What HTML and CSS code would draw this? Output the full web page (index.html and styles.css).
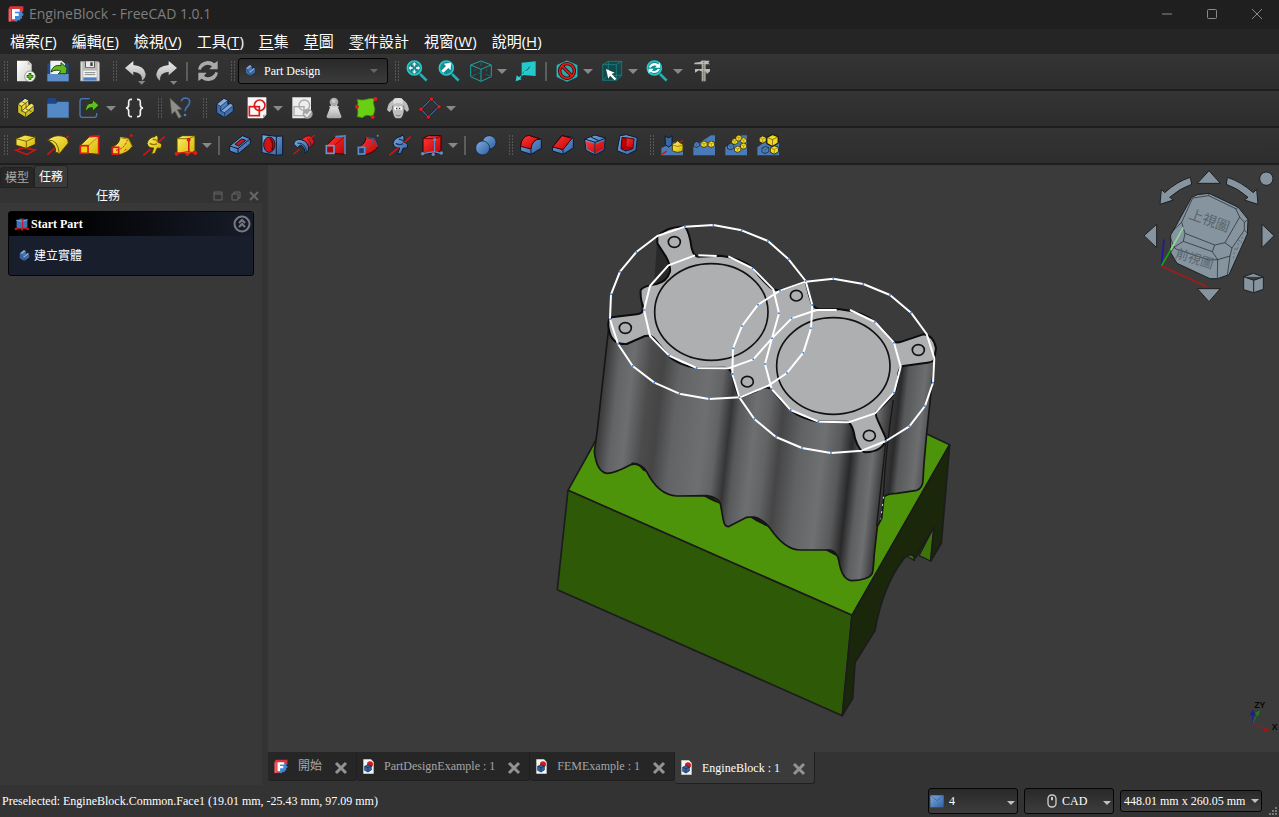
FILE: index.html
```html
<!DOCTYPE html>
<html lang="zh-Hant">
<head>
<meta charset="utf-8">
<title>EngineBlock - FreeCAD 1.0.1</title>
<link rel="stylesheet" href="styles.css">
</head>
<body>
<svg class="defs" aria-hidden="true">
  <defs>
    <linearGradient id="gBlue" x1="0" y1="0" x2="1" y2="1"><stop offset="0" stop-color="#7fabdc"/><stop offset="1" stop-color="#2f5fa3"/></linearGradient>
    <linearGradient id="gYellow" x1="0" y1="0" x2="1" y2="1"><stop offset="0" stop-color="#fff06a"/><stop offset="1" stop-color="#d3b400"/></linearGradient>
    <linearGradient id="gRed" x1="0" y1="0" x2="1" y2="1"><stop offset="0" stop-color="#ff3a3a"/><stop offset="1" stop-color="#c00000"/></linearGradient>
    <linearGradient id="gGray" x1="0" y1="0" x2="0" y2="1"><stop offset="0" stop-color="#eeeeee"/><stop offset="1" stop-color="#a9a9a9"/></linearGradient>
    <linearGradient id="gPaper" x1="0" y1="0" x2="1" y2="1"><stop offset="0" stop-color="#ffffff"/><stop offset="1" stop-color="#cfcfcb"/></linearGradient>
  </defs>
  <symbol id="logo" viewBox="0 0 48 48">
    <path fill="#d8353f" d="M7 1H46V16H22V46L2 47V6z"/>
    <path fill="#e8636a" d="M2 10H9V46H2z"/>
    <path fill="#3f86d4" d="M20 15H44L42 21 47 23 45 29 41 30 43 37 37 38 36 44 30 42 26 47 20 46z"/>
    <path fill="#fff" d="M12 9H35V17H21V22H32V30H21V40H12z"/>
  </symbol>
  <symbol id="step" viewBox="0 0 66 66">
    <path d="M8 22 30 4 42 10V22L50 19 58 25V43L32 62 8 47z" fill="currentColor" stroke="#10203a" stroke-width="3" stroke-linejoin="round"/>
    <path d="M9 22 30 5 41 11 20 28z" fill="#fff" fill-opacity=".35"/>
    <path d="M20 42 50 20 57 26 32 46z" fill="#fff" fill-opacity=".3"/>
    <path d="M9 23 20 28V42L32 47V61L9 47zM32 47 57 27V43L32 61z" fill="#000" fill-opacity=".12"/>
    <path d="M9 22 20 28 41 11M20 28V42L32 47 57 26M32 47V61M42 11V24L20 42" fill="none" stroke="#10203a" stroke-width="2"/>
  </symbol>
  <symbol id="cubelet" viewBox="1 1 22 23">
    <path d="M2 7 12 2 22 6V17L12 23 2 18z" fill="currentColor" stroke="#15150a" stroke-width="2"/>
    <path d="M2 7 12 11 22 6M12 11V23" fill="none" stroke="#3a3408" stroke-width="1"/>
  </symbol>
  <symbol id="doc" viewBox="0 0 33 45">
    <path d="M1 1H24L32 9V44H1z" fill="#f4f4f4"/>
    <circle cx="21" cy="16" r="9" fill="#d61a1a"/>
    <path d="M5 22 15 17 25 21V33L15 39 5 34z" fill="#3465a4" stroke="#11284a" stroke-width="2"/>
    <path d="M5 22 15 26 25 21M15 26V38" fill="none" stroke="#11284a" stroke-width="2"/>
  </symbol>
  <symbol id="lens" viewBox="0 0 66 66">
    <path d="M42 42 62 62" stroke="#19b5b8" stroke-width="8"/>
    <circle cx="25" cy="24" r="21" fill="#148b8f" stroke="#28c9cc" stroke-width="5"/>
  </symbol>
  <symbol id="close" viewBox="0 0 14 14"><path d="M2 2 12 12M12 2 2 12" stroke="#929292" stroke-width="3"/></symbol>
</svg>

<div class="app">
  <header class="titlebar">
    <svg class="logo"><use href="#logo"/></svg>
    <h1>EngineBlock - FreeCAD 1.0.1</h1>
    <div class="window-buttons">
      <button aria-label="最小化"><svg viewBox="0 0 12 12"><path d="M1 6H11"/></svg></button>
      <button aria-label="最大化"><svg viewBox="0 0 12 12"><rect x="1.5" y="1.5" width="9" height="9" rx="1"/></svg></button>
      <button aria-label="關閉"><svg viewBox="0 0 12 12"><path d="M1 1 11 11M11 1 1 11"/></svg></button>
    </div>
  </header>

  <nav class="menubar">
    <button>檔案(<u>F</u>)</button><button>編輯(<u>E</u>)</button><button>檢視(<u>V</u>)</button><button>工具(<u>T</u>)</button><button><u>巨</u>集</button><button><u>草</u>圖</button><button><u>零</u>件設計</button><button>視窗(<u>W</u>)</button><button>說明(<u>H</u>)</button>
  </nav>

  <div class="toolbar">
    <div class="group"><i class="grip"></i>
      <button class="tool" aria-label="新增"><svg viewBox="0 0 66 66"><path d="M6 2H40L50 12V64H6z" fill="url(#gPaper)"/><path d="M38 2 50 14H38z" fill="#bdbdb8"/><circle cx="45" cy="49" r="16" fill="#f3f7ef" stroke="#777" stroke-width="2"/><path d="M45 39V59M35 49H55" stroke="#1d4d08" stroke-width="8"/><path d="M45 41V57M37 49H53" stroke="#63c41c" stroke-width="4"/></svg></button>
      <button class="tool" aria-label="開啟"><svg viewBox="0 0 66 66"><path d="M1 10H65V64H1z" fill="#204a87"/><path d="M10 2H44L54 11V50H10z" fill="#f2f2f2"/><path d="M1 42H65V64H1z" fill="#5d90cb"/><path d="M12 36Q18 12 42 17V8L60 24 58 41H34L42 34Q28 26 12 36z" fill="#62b821" stroke="#1d4a0b" stroke-width="3"/></svg></button>
      <button class="tool" aria-label="儲存"><svg viewBox="0 0 66 66"><path d="M4 4H58L62 8V64H4z" fill="#b9b9b6"/><path d="M8 7V61M58 10V61" stroke="#dededb" stroke-width="4"/><path d="M18 4H48V23H18z" fill="#5a5a58"/><path d="M21 4H45V21H21z" fill="#e9e9e9"/><path d="M34 7H41V18H34z" fill="#3b3b3b"/><path d="M13 32H53V62H13z" fill="#f4f4f4"/><path d="M17 38H49M17 44H49" stroke="#888" stroke-width="3"/><path d="M13 52H53V62H13z" fill="#4b82c4"/></svg></button>
    </div>
    <div class="group"><i class="grip"></i>
      <button class="tool" aria-label="復原"><svg viewBox="0 0 66 66"><path d="M3 24 28 3V15Q62 18 65 42 65 55 54 62 57 38 28 35V46z" fill="url(#gGray)"/><path d="M42 63H64L53 74z" fill="#858585"/></svg></button>
      <button class="tool" aria-label="重做"><svg viewBox="0 0 66 66"><path d="M63 24 38 3V15Q4 18 1 42 1 55 12 62 9 38 38 35V46z" fill="url(#gGray)"/><path d="M42 63H64L53 74z" fill="#858585"/></svg></button>
      <i class="sep"></i>
      <button class="tool" aria-label="重新計算"><svg viewBox="0 0 66 66"><path d="M3 28Q7 6 31 3 42 2 52 10L62 3V28H37L45 19Q32 9 17 21 11 27 11 30z" fill="#aaa"/><path d="M63 38Q59 60 35 63 24 64 14 56L4 63V38H29L21 47Q34 57 49 45 55 39 55 36z" fill="#aaa"/></svg></button>
    </div>
    <div class="group"><i class="grip"></i>
      <label class="combo"><svg class="combo-icon"><use href="#step"/></svg><select aria-label="工作台"><option>Part Design</option></select><i class="caret"></i></label>
    </div>
    <div class="group"><i class="grip"></i>
      <button class="tool" aria-label="顯示全部"><svg viewBox="0 0 66 66"><use href="#lens"/><path d="M25 6 33 14H28V21H35V16L43 24 35 32V27H28V34H33L25 42 17 34H22V27H15V32L7 24 15 16V21H22V14H17z" fill="#f4ffff" stroke="#0d5d60" stroke-width="1"/><path d="M20 19H30V29H20z" fill="#15898c"/></svg></button>
      <button class="tool" aria-label="縮放至選取"><svg viewBox="0 0 66 66"><use href="#lens"/><path d="M10 32 24 18 17 11 39 8 38 31 31 24 16 38z" fill="#fff"/></svg></button>
      <button class="tool more" aria-label="等角視圖"><svg viewBox="0 0 66 66"><g fill="none" stroke="#1ba3a5" stroke-width="3"><path d="M2 15 33 3 64 15V50L33 64 2 50zM2 15 33 28 64 15M33 28V64"/><path d="M33 3V18M2 50 20 42M64 50 46 42M33 45 25 37M15 28V33M50 34V28M33 34V40" stroke="#116c6e"/></g></svg><i class="caret"></i></button>
      <button class="tool" aria-label="前往連結物件"><svg viewBox="0 0 66 66"><path d="M20 8 62 4V48L20 45z" fill="#24c9cb"/><path d="M44 20Q38 30 34 31T20 45" fill="none" stroke="#0b5c5e" stroke-width="3"/><path d="M33 33 12 55" stroke="#35d2d4" stroke-width="4" stroke-dasharray="8 3"/><path d="M2 64 5 46 20 58z" fill="#2fd0d2"/></svg></button>
      <i class="sep"></i>
      <button class="tool more" aria-label="繪圖樣式"><svg viewBox="0 0 66 66"><path d="M3 16 33 3 63 16V50L33 64 3 50z" fill="#21a9ab" stroke="#35cfd1" stroke-width="2"/><circle cx="33" cy="33" r="22" fill="none" stroke="#3c0000" stroke-width="10"/><path d="M17 17 49 49" stroke="#3c0000" stroke-width="10"/><circle cx="33" cy="33" r="22" fill="none" stroke="#e51c1c" stroke-width="5"/><path d="M17 17 49 49" stroke="#e51c1c" stroke-width="5"/></svg><i class="caret"></i></button>
      <button class="tool more" aria-label="選取"><svg viewBox="0 0 66 66"><path d="M5 14 22 4H62V47L46 61H5z" fill="#14494a"/><path d="M5 14H46L62 4M46 14V61M5 14 22 4H62V47L46 61H5zM22 4V46H62M22 46 5 61" fill="none" stroke="#1c8d8f" stroke-width="2"/><path d="M15 27 41 38 32 42 46 56 41 61 27 47 22 56z" fill="#fff"/></svg><i class="caret"></i></button>
      <button class="tool more" aria-label="同步視圖"><svg viewBox="0 0 66 66"><use href="#lens"/><path d="M8 22Q14 8 28 9L38 13 42 7V23H27L32 17Q20 14 14 23zM42 27Q36 40 22 39L12 35 8 41V26H23L18 32Q30 35 36 26z" fill="#f4ffff"/></svg><i class="caret"></i></button>
      <button class="tool" aria-label="測量"><svg viewBox="0 0 66 66"><path d="M32 2H44V64H32z" fill="#aaa99f"/><path d="M10 8 27 6 32 2H56L52 9 57 13H10zM12 27H57V34L48 42 44 34H30L24 31 12 38z" fill="#bdbcb2"/><path d="M38 5V62" stroke="#696861" stroke-width="4" stroke-dasharray="3 3"/></svg></button>
    </div>
  </div>

  <div class="toolbar">
    <div class="group"><i class="grip"></i>
      <button class="tool" aria-label="建立零件"><svg viewBox="0 0 66 66" class="yellow"><use href="#step"/><path d="M20 14 33 20V36L50 44" fill="none" stroke="#4d4300" stroke-width="2"/></svg></button>
      <button class="tool" aria-label="建立群組"><svg viewBox="0 0 66 66"><path d="M1 7 4 3H24L29 11H65V62H1z" fill="#1d4684"/><path d="M1 20H27L32 15H65V63H1z" fill="#5589c6"/><path d="M2 62H65" stroke="#2b5a98" stroke-width="2"/></svg></button>
      <button class="tool more" aria-label="建立連結"><svg viewBox="0 0 66 66"><path d="M32 5H10Q3 5 3 12V54Q3 61 10 61H46Q53 61 53 54V48" fill="none" stroke="#4679b8" stroke-width="4"/><path d="M20 46Q17 18 40 18V7L60 25 40 43V32Q25 31 20 46z" fill="#62bd1f" stroke="#183f08" stroke-width="3"/></svg><i class="caret"></i></button>
      <button class="tool" aria-label="建立變數集"><svg viewBox="0 0 66 66"><path d="M24 7Q13 6 14 17V24Q14 32 6 33 14 34 14 42V49Q13 60 24 59M39 7Q50 6 49 17V24Q49 32 57 33 49 34 49 42V49Q50 60 39 59" fill="none" stroke="#f2f2f2" stroke-width="5"/></svg></button>
    </div>
    <div class="group"><i class="grip"></i>
      <button class="tool" aria-label="這是什麼"><svg viewBox="0 0 66 66"><path d="M3 4 38 36 25 38 37 59 29 64 18 43 8 52z" fill="#8e8e8a" stroke="#5a5a57" stroke-width="2"/><path d="M37 13Q39 3 50 3 63 4 62 16 61 24 54 30 48 35 48 43" fill="none" stroke="#4273b2" stroke-width="5"/><circle cx="48" cy="54" r="4" fill="#4c80c0"/></svg></button>
    </div>
    <div class="group"><i class="grip"></i>
      <button class="tool" aria-label="建立實體"><svg viewBox="0 0 66 66" class="blue"><use href="#step"/></svg></button>
      <button class="tool more" aria-label="建立草圖"><svg viewBox="0 0 66 66"><path d="M5 1H61V53L51 64H5z" fill="#f8f8f8"/><path d="M61 53 51 64V53z" fill="#a8a8a8"/><rect x="10" y="29" width="30" height="27" fill="none" stroke="#dd1717" stroke-width="5"/><circle cx="41" cy="25" r="16" fill="none" stroke="#dd1717" stroke-width="5"/></svg><i class="caret"></i></button>
      <button class="tool" aria-label="驗證草圖"><svg viewBox="0 0 66 66"><path d="M4 1H60V53L50 64H4z" fill="#ededed"/><rect x="9" y="29" width="30" height="27" fill="none" stroke="#aaa" stroke-width="4"/><circle cx="40" cy="25" r="16" fill="none" stroke="#aaa" stroke-width="4"/><circle cx="50" cy="50" r="15" fill="#a6a6a6"/><path d="M41 50 48 57 59 43" fill="none" stroke="#eee" stroke-width="5"/></svg></button>
      <button class="tool" aria-label="檢查幾何"><svg viewBox="0 0 66 66"><path d="M24 24H42L55 58Q56 64 48 64H17Q10 64 11 58z" fill="url(#gGray)"/><circle cx="33" cy="15" r="13" fill="#a9a9a9"/><circle cx="32" cy="12" r="6" fill="#ccc"/><path d="M19 29H47" stroke="#ccc" stroke-width="4"/></svg></button>
      <button class="tool" aria-label="次形狀連結"><svg viewBox="0 0 66 66"><path d="M6 7Q24 11 34 7T58 5Q53 18 58 29T52 60Q35 49 23 62L6 59Q12 40 4 29 12 20 6 7z" fill="#69cf14" stroke="#3b8209" stroke-width="2"/><g fill="#e01b1b"><circle cx="61" cy="6" r="6"/><circle cx="6" cy="29" r="6"/><circle cx="53" cy="60" r="6"/></g></svg></button>
      <button class="tool" aria-label="建立複本"><svg viewBox="0 0 66 66"><path d="M18 10Q22 2 33 3 45 2 49 10 62 15 66 38L60 45 51 35Q49 60 40 64H27Q19 60 16 35L8 46 0 39Q4 15 18 10z" fill="#bcbcbc"/><path d="M18 10Q22 2 33 3 45 2 49 10L46 22Q33 14 20 22z" fill="#dedede"/><path d="M17 26 16 38M50 26 51 38" stroke="#777" stroke-width="3"/><circle cx="27" cy="34" r="6" fill="#fff"/><circle cx="40" cy="34" r="6" fill="#fff"/><path d="M29 32V37M38 32V37" stroke="#333" stroke-width="4"/><path d="M27 54Q34 60 41 54" fill="none" stroke="#777" stroke-width="3"/></svg></button>
      <button class="tool more" aria-label="建立基準"><svg viewBox="0 0 66 66"><path d="M37 6 60 29 28 60 6 37z" fill="none" stroke="#10203a" stroke-width="6"/><path d="M37 6 60 29 28 60 6 37z" fill="none" stroke="#5b8fcb" stroke-width="3"/><g fill="#e01b1b" stroke="#4b0000"><circle cx="37" cy="6" r="6"/><circle cx="60" cy="29" r="6"/><circle cx="28" cy="60" r="6"/><circle cx="6" cy="37" r="6"/></g></svg><i class="caret"></i></button>
    </div>
  </div>

  <div class="toolbar">
    <div class="group"><i class="grip"></i>
      <button class="tool" aria-label="凸出"><svg viewBox="0 0 66 66"><path d="M3 49 24 41 60 48 36 62z" fill="none" stroke="#d01414" stroke-width="5"/><path d="M3 14 30 3 61 9V31L34 43 3 34z" fill="url(#gYellow)" stroke="#463c00" stroke-width="3"/><path d="M3 14 34 22 61 9M34 22V42" fill="none" stroke="#776600" stroke-width="3"/></svg></button>
      <button class="tool" aria-label="旋轉成形"><svg viewBox="0 0 66 66"><path d="M1 62 65 6" stroke="#d01414" stroke-width="5"/><path d="M2 19Q20 1 45 6 64 10 64 27L37 60Q33 56 25 55 30 34 2 19z" fill="url(#gYellow)" stroke="#463c00" stroke-width="3"/><path d="M2 19Q33 14 37 60" fill="none" stroke="#776600" stroke-width="3"/></svg></button>
      <button class="tool" aria-label="疊層拉伸"><svg viewBox="0 0 66 66"><path d="M3 35 31 8 59 6V61L26 58 3 57z" fill="url(#gYellow)" stroke="#463c00" stroke-width="3"/><path d="M31 8 59 6V61" fill="none" stroke="#dd1717" stroke-width="5"/><path d="M27 36 57 9" stroke="#8b7600" stroke-width="2"/><rect x="4" y="35" width="23" height="23" fill="#edd400" stroke="#dd1717" stroke-width="5"/></svg></button>
      <button class="tool" aria-label="掃掠"><svg viewBox="0 0 66 66"><path d="M3 40Q27 29 27 10L53 15 64 37Q50 59 18 63L3 60z" fill="url(#gYellow)" stroke="#463c00" stroke-width="3"/><path d="M27 10 52 14 63 38" fill="none" stroke="#c7a100" stroke-width="3"/><path d="M15 49Q41 44 49 18M41 50 48 42" fill="none" stroke="#dd1717" stroke-width="3" stroke-dasharray="7 4"/><rect x="4" y="40" width="19" height="20" fill="none" stroke="#dd1717" stroke-width="5"/><circle cx="61" cy="5" r="4" fill="#dd1717"/></svg></button>
      <button class="tool" aria-label="螺旋"><svg viewBox="0 0 66 66"><path d="M12 28Q18 9 36 8L38 2 45 8V25Q62 28 53 43L43 42 36 58 25 61 32 42Q16 44 12 28z" fill="url(#gYellow)" stroke="#463c00" stroke-width="3"/><path d="M20 28Q31 35 42 29M29 16Q43 16 45 25" fill="none" stroke="#8b7600" stroke-width="4"/><path d="M1 64 23 45M46 25 65 8" stroke="#d01414" stroke-width="5"/></svg></button>
      <button class="tool more" aria-label="加料基本體"><svg viewBox="0 0 66 66"><path d="M6 13 22 5H60V51L42 60 6 57z" fill="url(#gYellow)" stroke="#463c00" stroke-width="3"/><path d="M6 14H42L60 6M42 14V58" fill="none" stroke="#8b7600" stroke-width="3"/><path d="M41 17V53M4 59 40 53 60 58" fill="none" stroke="#d01414" stroke-width="4"/><g fill="#e01b1b"><circle cx="41" cy="17" r="6"/><circle cx="5" cy="59" r="6"/><circle cx="37" cy="61" r="5"/><circle cx="61" cy="57" r="6"/></g></svg><i class="caret"></i></button>
      <i class="sep"></i>
      <button class="tool" aria-label="凹陷"><svg viewBox="0 0 66 66"><path d="M2 36 40 5 64 14V29L27 60 2 51z" fill="url(#gBlue)" stroke="#0b1a30" stroke-width="3"/><path d="M2 36 27 44 64 14M27 44V59" fill="none" stroke="#0b1a30" stroke-width="3"/><path d="M18 31 38 15 50 19 29 36z" fill="#d01414" stroke="#0b1a30" stroke-width="3"/></svg></button>
      <button class="tool" aria-label="鑽孔"><svg viewBox="0 0 66 66"><path d="M3 2 46 7V64L3 56zM46 7 65 6V62L46 64" fill="url(#gBlue)" stroke="#0b1a30" stroke-width="3"/><ellipse cx="25" cy="32" rx="17" ry="23" fill="#d01414" stroke="#0b1a30" stroke-width="3"/><path d="M27 13Q40 24 33 50" fill="none" stroke="#6a0000" stroke-width="5"/></svg></button>
      <button class="tool" aria-label="環狀切槽"><svg viewBox="0 0 66 66"><path d="M26 18Q38 2 55 7L65 24 49 43 35 25z" fill="url(#gRed)" stroke="#400" stroke-width="2"/><path d="M2 30Q6 14 25 17 49 24 47 48L37 58Q34 36 23 33L13 41z" fill="url(#gBlue)" stroke="#0b1a30" stroke-width="3"/><path d="M13 27Q38 26 41 54M42 13Q53 19 54 34" fill="none" stroke="#143058" stroke-width="3"/><path d="M1 61 20 46M46 18 65 4" stroke="#d01414" stroke-width="4"/></svg></button>
      <button class="tool" aria-label="疊層切除"><svg viewBox="0 0 66 66"><path d="M3 35 31 8 60 6V61L26 58 3 57z" fill="url(#gRed)" stroke="#400" stroke-width="3"/><path d="M31 8 60 6V61" fill="none" stroke="#5588c6" stroke-width="5"/><path d="M27 36 57 9" stroke="#700" stroke-width="2"/><rect x="4" y="35" width="23" height="23" fill="#b40000" stroke="#6798d0" stroke-width="5"/></svg></button>
      <button class="tool" aria-label="掃掠切除"><svg viewBox="0 0 66 66"><path d="M3 40Q27 29 27 10L53 15 64 37Q50 59 18 63L3 60z" fill="url(#gRed)" stroke="#300" stroke-width="3"/><path d="M27 10 52 14 63 38M15 49Q41 44 49 18" fill="none" stroke="#31639f" stroke-width="3"/><rect x="4" y="40" width="19" height="20" fill="#223c67" stroke="#5b8fcb" stroke-width="5"/><circle cx="62" cy="5" r="3" fill="#5b8fcb"/></svg></button>
      <button class="tool" aria-label="螺旋切除"><svg viewBox="0 0 66 66"><path d="M12 28Q18 9 36 8L38 2 45 8V25Q62 28 53 43L43 42 36 58 25 61 32 42Q16 44 12 28z" fill="url(#gBlue)" stroke="#0b1a30" stroke-width="3"/><path d="M20 28Q31 35 42 29M29 16Q43 16 45 25" fill="none" stroke="#143869" stroke-width="4"/><path d="M1 64 29 40M46 25 65 8" stroke="#d01414" stroke-width="5"/></svg></button>
      <button class="tool more" aria-label="減料基本體"><svg viewBox="0 0 66 66"><path d="M6 13 22 5H60V51L42 60 6 57z" fill="url(#gRed)" stroke="#300" stroke-width="3"/><path d="M6 14H42L60 6M42 14V58" fill="none" stroke="#820000" stroke-width="3"/><path d="M41 17V53M4 59 40 53 60 58" fill="none" stroke="#5b8fcb" stroke-width="4"/><g fill="#5b8fcb"><circle cx="41" cy="17" r="5"/><circle cx="5" cy="59" r="5"/><circle cx="37" cy="61" r="5"/><circle cx="61" cy="57" r="5"/></g></svg><i class="caret"></i></button>
      <i class="sep"></i>
      <button class="tool" aria-label="布林運算"><svg viewBox="0 0 66 66"><circle cx="43" cy="25" r="20" fill="url(#gBlue)" stroke="#0b1a30" stroke-width="2"/><circle cx="23" cy="42" r="21" fill="url(#gBlue)" stroke="#0b1a30" stroke-width="2"/></svg></button>
    </div>
    <div class="group"><i class="grip"></i>
      <button class="tool" aria-label="圓角"><svg viewBox="0 0 66 66"><path d="M2 37Q4 8 26 4L64 16V43L33 61 2 51z" fill="url(#gBlue)" stroke="#0b1a30" stroke-width="3"/><path d="M2 37Q4 8 26 4L61 15Q36 16 33 45z" fill="url(#gRed)" stroke="#300" stroke-width="3"/><path d="M33 45V60" stroke="#0b1a30" stroke-width="3"/></svg></button>
      <button class="tool" aria-label="倒角"><svg viewBox="0 0 66 66"><path d="M2 39 28 5 60 9 64 15V42L33 61 2 51z" fill="url(#gBlue)" stroke="#0b1a30" stroke-width="3"/><path d="M2 39 30 5 60 13 33 47z" fill="url(#gRed)" stroke="#300" stroke-width="3"/><path d="M33 47V60" stroke="#0b1a30" stroke-width="3"/></svg></button>
      <button class="tool" aria-label="拔模"><svg viewBox="0 0 66 66"><path d="M2 15 33 3 64 12 60 49 33 63 6 49z" fill="url(#gBlue)" stroke="#0b1a30" stroke-width="3"/><path d="M6 22 32 29V57L9 45zM36 29 61 20 57 45 36 57z" fill="url(#gRed)"/><path d="M2 15 33 25 64 13M33 25V62M21 9 44 20" fill="none" stroke="#0b1a30" stroke-width="3"/></svg></button>
      <button class="tool" aria-label="薄殼"><svg viewBox="0 0 66 66"><path d="M12 5 31 2 64 11 60 49 34 62 3 50z" fill="url(#gBlue)" stroke="#0b1a30" stroke-width="3"/><path d="M18 10 54 15 50 44 29 51 15 44z" fill="#c30000" stroke="#0b1a30" stroke-width="3"/><path d="M31 12 54 15 50 43 29 39zM29 39 15 44" fill="url(#gRed)" stroke="#600" stroke-width="2"/></svg></button>
    </div>
    <div class="group"><i class="grip"></i>
      <button class="tool" aria-label="鏡像"><svg viewBox="0 0 66 66"><path d="M1 42 40 24 66 37V64H1z" fill="#4a7ab7"/><path d="M12 6 24 12 33 5V32L23 39 13 32z" fill="#3768a5" stroke="#0b1a30" stroke-width="3"/><path d="M3 61 65 19" stroke="#d01414" stroke-width="4" stroke-dasharray="17 22 12 8"/><path d="M34 33Q35 26 44 26L50 20 56 26Q66 28 66 33V50Q50 60 34 50z" fill="url(#gYellow)" stroke="#463c00" stroke-width="3"/><path d="M34 33Q50 42 66 33" fill="none" stroke="#776600" stroke-width="2"/></svg></button>
      <button class="tool" aria-label="線性陣列"><svg viewBox="0 0 66 66"><path d="M1 38 54 4H66V64H1z" fill="#4a7ab7"/><g class="blue"><use href="#cubelet" x="1" y="22" width="20" height="20"/></g><g class="yellow"><use href="#cubelet" x="22" y="20" width="22" height="22"/><use href="#cubelet" x="44" y="20" width="22" height="22"/></g></svg></button>
      <button class="tool" aria-label="環形陣列"><svg viewBox="0 0 66 66"><path d="M1 40 49 4H66V64H1z" fill="#4a7ab7"/><g class="blue"><use href="#cubelet" x="6" y="27" width="22" height="22"/></g><g class="yellow"><use href="#cubelet" x="19" y="12" width="21" height="21"/><use href="#cubelet" x="31" y="2" width="21" height="21"/><use href="#cubelet" x="46" y="10" width="20" height="20"/><use href="#cubelet" x="45" y="26" width="21" height="21"/><use href="#cubelet" x="27" y="35" width="22" height="22"/></g></svg></button>
      <button class="tool" aria-label="多重變換"><svg viewBox="0 0 66 66"><path d="M1 40 22 25H66V64H1z" fill="#4a7ab7"/><g class="yellow"><use href="#cubelet" x="27" y="0" width="39" height="39"/><use href="#cubelet" x="5" y="5" width="24" height="24"/><use href="#cubelet" x="38" y="34" width="28" height="28"/></g><g class="blue"><use href="#cubelet" x="13" y="36" width="24" height="24"/></g></svg></button>
    </div>
  </div>

  <main class="workspace">
    <aside class="side">
      <div class="side-tabs" role="tablist"><button role="tab">模型</button><button role="tab" class="active" aria-selected="true">任務</button></div>
      <div class="side-title"><h2>任務</h2>
        <div class="dock-buttons">
          <button aria-label="折疊"><svg viewBox="0 0 10 10"><path d="M1 1H9V9H1zM1 3H9"/></svg></button>
          <button aria-label="浮動"><svg viewBox="0 0 10 10"><path d="M3 3V1H9V7H7M1 3H7V9H1z"/></svg></button>
          <button aria-label="關閉"><svg viewBox="0 0 10 10"><path class="thick" d="M1 1 9 9M9 1 1 9"/></svg></button>
        </div>
      </div>
      <div class="side-body">
        <section class="task">
          <header><svg viewBox="0 0 42 42"><path d="M4 10 18 4 38 8V32L22 37 4 33z" fill="#3f73b5" stroke="#0b1a30" stroke-width="2"/><path d="M4 10 22 13 38 8" fill="none" stroke="#84afe0" stroke-width="3"/><path d="M23 10V34M2 36 23 33 39 36" fill="none" stroke="#d01414" stroke-width="3"/><g fill="#d01414"><circle cx="23" cy="8" r="3"/><circle cx="3" cy="36" r="4"/><circle cx="38" cy="36" r="4"/><circle cx="21" cy="38" r="3"/></g></svg>
            <h3>Start Part</h3>
            <button aria-label="收合"><svg viewBox="0 0 18 18"><circle cx="9" cy="9" r="7.5"/><path d="M6 8 9 5 12 8M6 12 9 9 12 12"/></svg></button></header>
          <a href="#body"><svg class="blue"><use href="#step"/></svg>建立實體</a>
        </section>
      </div>
    </aside>

    <div class="center">
      <div class="view">
        <svg class="model" viewBox="268 165 1011 587" role="img" aria-label="引擎缸體模型">
          <defs>
            <linearGradient id="metal" gradientUnits="userSpaceOnUse" x1="165" y1="800" x2="1165" y2="910">
              <stop offset="0" stop-color="#3d3d3e"/><stop offset=".04" stop-color="#636465"/><stop offset=".08" stop-color="#6d6e70"/><stop offset=".13" stop-color="#4c4c4d"/><stop offset=".17" stop-color="#454546"/><stop offset=".22" stop-color="#626365"/><stop offset=".31" stop-color="#6e6f71"/><stop offset=".35" stop-color="#626365"/><stop offset=".385" stop-color="#353536"/><stop offset=".41" stop-color="#58595a"/><stop offset=".46" stop-color="#6e6f71"/><stop offset=".5" stop-color="#626365"/><stop offset=".54" stop-color="#454546"/><stop offset=".6" stop-color="#616264"/><stop offset=".67" stop-color="#6f7072"/><stop offset=".72" stop-color="#58595a"/><stop offset=".755" stop-color="#29292a"/><stop offset=".785" stop-color="#5d5e5f"/><stop offset=".82" stop-color="#6e6f71"/><stop offset=".855" stop-color="#3b3b3c"/><stop offset=".88" stop-color="#2b2b2c"/><stop offset=".9" stop-color="#57585a"/><stop offset=".95" stop-color="#6d6e70"/><stop offset="1" stop-color="#3a3a3b"/>
            </linearGradient>
          </defs>
          <g transform="translate(540 430) scale(.33333)" stroke="#1c1c1c" stroke-width="5" stroke-linejoin="round">
            <path fill="#4d940a" d="M84 181 168 30 1162 13 1229 44 936 556z"/>
            <path fill="#3d730b" stroke-width="4" d="M1182 290 1172 393 1137 377zM1100 378 1118 371 1124 392z"/>
            <path fill="#2e5a08" d="M84 181 936 556 907 857 52 479z"/>
            <path fill="#1a270b" d="M936 556 1229 44 1204 340 1172 393 1182 290 1126 384Q1112 362 1090 388 1028 470 1005 602L945 698 938 805 907 857z"/>
          </g>
          <g transform="translate(540 200) scale(.33333)" stroke-linejoin="round">
            <path fill="#292929" d="M352 112 342 258 302 268 303 345 400 260V180z"/>
            <path fill="url(#metal)" stroke="#161616" stroke-width="5" d="M207 375 172 690 163 755Q170 815 200 820 225 820 270 795 300 785 320 815 355 885 410 888L500 887Q530 890 541 910L550 960Q553 980 565 980L620 952Q660 945 690 985 735 1050 780 1050L860 1050Q890 1050 896 1080 905 1140 935 1142 985 1140 997 1120 1000 1110 1003 1060L1012 980 1025 955 1032 890Q1045 880 1070 880L1130 871Q1148 865 1149 840L1152 790 1160 700 1184 475 1060 480 880 480 500 400 240 375z"/>
            <path fill="#161616" d="M270 797Q290 786 310 812L318 815Q300 785 275 788zM490 888Q520 885 540 912 520 905 490 888zM630 952Q655 940 690 982 655 970 630 952zM855 1050Q885 1040 893 1070z"/>
            <path d="M1038 720 1010 978M1060 600Q1036 760 1030 890" fill="none" stroke="#161616" stroke-width="4"/>
            <path d="M1031 890 1022 958" stroke="#ddd" stroke-width="3" stroke-dasharray="6 16"/>
            <path fill="#aeafb1" stroke="#0c0c0c" stroke-width="6" d="M352 110Q380 78 435 80 448 95 455 145 460 168 475 170L540 167Q600 172 640 205 660 235 690 262 705 275 730 268L797 245Q806 285 815 310 822 325 840 328L900 328Q970 335 1008 368 1035 395 1055 420 1065 432 1085 425L1150 403Q1180 405 1188 445L1182 480Q1178 487 1150 490L1090 498Q1078 502 1075 520 1072 560 1062 580 1040 610 1008 635 1005 645 1015 665L1038 715Q1030 755 975 757 958 755 945 715 938 668 920 665L835 665Q780 655 752 630 720 600 695 568 680 555 650 573L600 592Q590 585 578 525 572 505 555 503L470 504Q415 495 385 467L345 418Q335 405 315 408L260 432Q215 435 207 390 200 360 215 352L290 343Q310 340 312 325 300 300 302 270 310 258 350 252 380 245 390 215 392 195 378 170L352 130z"/>
            <g fill="none" stroke="#121212" stroke-width="5"><ellipse cx="514" cy="336" rx="170" ry="145"/><ellipse cx="880" cy="498" rx="170" ry="145"/><ellipse cx="403" cy="126" rx="18" ry="16"/><ellipse cx="256" cy="384" rx="18" ry="16"/><ellipse cx="769" cy="287" rx="18" ry="16"/><ellipse cx="622" cy="545" rx="18" ry="16"/><ellipse cx="1135" cy="450" rx="18" ry="16"/><ellipse cx="988" cy="707" rx="18" ry="16"/></g>
            <g fill="none" stroke="#fff" stroke-width="6">
              <path d="M520 75 605 91 684 123 746 178 797 243 817 315 813 385 790 458 741 519 685 557 600 592 507 597 418 581 343 548 278 498 234 432 210 358 213 283 240 215 289 156 352 108 435 80z"/>
              <path d="M880 236 970 252 1050 285 1113 338 1160 402 1183 475 1179 548 1155 618 1108 679 1038 723 965 752 873 759 786 744 708 711 643 657 598 592 577 522 579 445 606 378 654 314 720 272 797 245z"/>
              <path d="M385 196 465 166M475 166 530 168M565 169 638 205 700 268 717 340 696 415 640 478 565 505 470 504 387 467 330 408 312 330 330 258 385 196"/>
              <path d="M755 355 830 330 890 330M930 330 1005 366 1062 428 1082 500 1062 578 1005 640 925 667 835 665 752 630 695 567 675 492 696 415 755 355"/>
            </g>
            <path fill="none" stroke="#3b82f6" stroke-width="6" stroke-linecap="round" d="M520 75h0M605 91h0M684 123h0M746 178h0M797 243h0M817 315h0M813 385h0M790 458h0M741 519h0M507 597h0M418 581h0M343 548h0M278 498h0M234 432h0M210 358h0M213 283h0M240 215h0M289 156h0M435 80h0M880 236h0M970 252h0M1050 285h0M1113 338h0M1179 548h0M1155 618h0M1108 679h0M1038 723h0M873 759h0M786 744h0M708 711h0M643 657h0M598 592h0M577 522h0M579 445h0M606 378h0M654 314h0M720 272h0M717 340h0M696 415h0M640 478h0M470 504h0M387 467h0M312 330h0M638 205h0M755 355h0M1005 366h0M1062 428h0M1062 578h0M835 665h0M752 630h0M695 567h0M675 492h0"/>
          </g>
        </svg>

        <svg class="navcube" viewBox="30 495 417 417" role="img" aria-label="導覽方塊">
          <g fill="#85949f" stroke="#1d2023" stroke-width="3" stroke-linejoin="round">
            <path d="M237 512 202 550H271zM42 707 80 673V743zM432 707 396 673V743zM202 866H271L237 905zM181 532 185 553Q150 565 119 592L130 600 90 613 94 568 104 578Q140 545 181 532zM292 532 289 553Q324 565 354 592L343 600 384 613 380 568 370 578Q333 545 292 532z"/>
            <circle cx="409" cy="536" r="20"/>
            <path d="M341 830 370 820 400 831V868L371 878 341 869zM341 830 371 841 400 831M371 841V878"/>
            <path d="M185 592 202 584 237 580 325 622 354 658 352 702 297 824 262 836 240 836 141 790 122 758 122 705 131 690z"/>
            <path d="M188 594 236 587 317 626 329 651 285 728 254 735 165 700 155 667zM165 700 160 724 247 755 254 735M285 728 306 744 300 768 263 779 247 755M131 690 155 667M122 715 132 742 160 724M132 742 140 748 237 780 263 779M122 758 132 742M262 836 263 779M329 651 343 667 354 658M343 667 343 690 306 744M343 690 353 700M300 768 292 826M325 622 317 626M237 580 236 587" fill="none" stroke-width="2"/>
          </g>
          <path d="M310 775 315 742 322 751 327 721 333 728 339 700" fill="none" stroke="#6b7881" stroke-width="4" stroke-dasharray="7 5"/>
          <g class="face-text"><text transform="translate(174 654) rotate(20)" font-size="42">上視圖</text><text transform="translate(134 772) rotate(17)" font-size="39">前視圖</text></g>
          <path d="M94 798 102 718" stroke="#1b1ba0" stroke-width="5"/><path d="M94 798 122 750" stroke="#18a018" stroke-width="5"/><path d="M122 750 160 682" stroke="#8ed69f" stroke-width="5"/><path d="M94 798 231 860" stroke="#a31b1b" stroke-width="5"/>
        </svg>

        <svg class="axes" viewBox="1035 30 102 105" role="img" aria-label="座標軸">
          <path d="M1058 100V75" stroke="#1c1c8c" stroke-width="3"/><path d="M1050 76 1058 59 1067 76z" fill="#1c1c8c"/>
          <path d="M1059 98 1070 76" stroke="#1b801b" stroke-width="3"/><path d="M1064 70 1080 61 1075 78z" fill="#1b801b"/>
          <path d="M1058 100 1094 117" stroke="#9a1919" stroke-width="3"/><path d="M1096 111 1109 124 1091 123z" fill="#9a1919"/>
          <text x="1063" y="53" font-size="26">ZY</text><text x="1115" y="119" font-size="26">X</text>
        </svg>
      </div>

      <div class="doc-tabs" role="tablist">
        <div class="doc-tab start"><button role="tab"><svg><use href="#logo"/></svg>開始</button><button class="x" aria-label="關閉"><svg><use href="#close"/></svg></button></div>
        <div class="doc-tab"><button role="tab"><svg><use href="#doc"/></svg>PartDesignExample : 1</button><button class="x" aria-label="關閉"><svg><use href="#close"/></svg></button></div>
        <div class="doc-tab"><button role="tab"><svg><use href="#doc"/></svg>FEMExample : 1</button><button class="x" aria-label="關閉"><svg><use href="#close"/></svg></button></div>
        <div class="doc-tab active"><button role="tab" aria-selected="true"><svg><use href="#doc"/></svg>EngineBlock : 1</button><button class="x" aria-label="關閉"><svg><use href="#close"/></svg></button></div>
      </div>
    </div>
  </main>

  <footer class="statusbar">
    <p>Preselected: EngineBlock.Common.Face1 (19.01 mm, -25.43 mm, 97.09 mm)</p>
    <button class="status-btn notes"><svg viewBox="0 0 42 42"><path d="M1 4H41V40H1z" fill="url(#gBlue)"/><path d="M1 4 21 20 41 4" fill="none" stroke="#2d5c9c" stroke-width="2"/></svg>4<i class="caret"></i></button>
    <button class="status-btn mouse"><svg viewBox="0 0 30 42"><rect x="3" y="3" width="24" height="36" rx="11" fill="none" stroke="#d1cbc8" stroke-width="4"/><path d="M15 9V19" stroke="#d1cbc8" stroke-width="6"/></svg>CAD<i class="caret"></i></button>
    <button class="status-btn size">448.01 mm x 260.05 mm<i class="caret"></i></button>
    <svg class="resize" viewBox="0 0 10 10"><path d="M7 1h2v2H7zM4 4h2v2H4zM7 4h2v2H7zM1 7h2v2H1zM4 7h2v2H4zM7 7h2v2H7z" fill="#777"/></svg>
  </footer>
</div>
</body>
</html>
```
FILE: styles.css
```css
* { box-sizing: border-box; }
body { margin: 0; background: #333; color: #fff; font: 12px/16px "Liberation Serif", "Noto Sans CJK TC", serif; }
button { margin: 0; padding: 0; border: 0; background: none; color: inherit; font: inherit; }
h1, h2, h3, p { margin: 0; font-weight: normal; font-size: inherit; }
svg { display: block; overflow: visible; }
.defs { position: absolute; width: 0; height: 0; }
.blue { color: #4a7fc1; }
.yellow { color: #f0d824; }
.app { display: flex; flex-direction: column; height: 100vh; overflow: hidden; }

.titlebar { display: flex; align-items: center; height: 29px; padding: 0 0 2px 8px; background: #1f1f1f; color: #7e7e7e; }
.titlebar .logo { width: 16px; height: 16px; }
.titlebar h1 { flex: 1; margin-left: 5px; font: 14px/20px "Open Sans", sans-serif; }
.window-buttons { display: flex; }
.window-buttons button { width: 45px; height: 27px; display: grid; place-items: center; }
.window-buttons svg { width: 12px; height: 12px; fill: none; stroke: #8a8a8a; }

.menubar { display: flex; height: 25px; gap: 15px; padding-left: 10px; background: #252525; font: 15px/25px "Open Sans", "Noto Sans CJK TC", sans-serif; }
.menubar u { text-underline-offset: 2px; }

.toolbar { display: flex; flex: none; align-items: center; gap: 5px; height: 37px; padding: 0 0 1px 2px; background: linear-gradient(#343434, #2d2d2d); border-bottom: 2px solid #1e1e1e; }
.group { display: flex; align-items: center; }
.grip { width: 8px; height: 20px; background: repeating-linear-gradient(transparent 0 2px, #303030 2px 3px), linear-gradient(90deg, transparent 2px, #565656 2px 3px, transparent 3px 5px, #565656 5px 6px, transparent 6px); }
.tool { display: flex; align-items: center; width: 32px; height: 32px; padding-left: 5px; }
.tool svg { flex: none; width: 22px; height: 22px; }
.tool.more { width: 45px; }
.more .caret { margin-left: 5px; }
.sep { width: 2px; height: 19px; margin: 0 4px 0 3px; background: #5d5d5d; }
.caret { display: block; border: 5px solid transparent; border-top-color: #888; border-bottom-width: 0; }
.combo { position: relative; display: block; width: 150px; margin-left: 1px; color: #4a7fc1; }
.combo select { appearance: none; display: block; width: 100%; height: 26px; padding: 0 25px; border: 1px solid #050505; border-radius: 3px; background: linear-gradient(#292929, #3b3b3b); color: #fff; font: inherit; }
.combo-icon { position: absolute; left: 6px; top: 6px; width: 13px; height: 13px; }
.combo .caret { position: absolute; right: 10px; top: 11px; border-width: 4px 4px 0; border-top-color: #666; }

.workspace { display: flex; flex: 1; min-height: 0; }
.side { display: flex; flex-direction: column; width: 268px; padding-right: 6px; background: #333; }
.side-tabs { display: flex; align-items: flex-end; height: 23px; }
.side-tabs button { width: 34px; height: 21px; border: 1px solid #222; border-radius: 3px 3px 0 0; background: #272727; color: #a9a9a9; }
.side-tabs .active { height: 23px; background: #3a3a3a; color: #fff; }
.side-title { display: flex; align-items: center; height: 15px; padding: 0 3px 0 96px; }
.side-title h2 { flex: 1; }
.dock-buttons { display: flex; gap: 8px; }
.dock-buttons svg { width: 10px; height: 10px; fill: none; stroke: #666; }
.dock-buttons .thick { stroke-width: 2px; }
.side-body { flex: 1; padding: 8px; background: #383838; }
.task { border: 1px solid #050505; border-radius: 3px; background: #181e2b; }
.task header { display: flex; align-items: center; height: 24px; padding: 0 2px 0 6px; background: linear-gradient(90deg, #000 20%, #171c29); }
.task header svg { width: 14px; height: 14px; margin-right: 2px; }
.task h3 { flex: 1; font-weight: bold; }
.task header button svg { width: 18px; height: 18px; margin: 0; fill: none; stroke: #777a80; stroke-width: 2px; }
.task a { display: flex; align-items: center; gap: 3px; height: 39px; padding-left: 9px; color: #fff; text-decoration: none; }
.task a svg { width: 13px; height: 13px; }

.center { display: flex; flex: 1; flex-direction: column; min-width: 0; background: #333; }
.view { position: relative; flex: 1; min-height: 0; background: #3b3b3b; }
.model { width: 100%; height: 100%; }
.navcube { position: absolute; top: 0; right: 0; width: 139px; height: 139px; }
.face-text { fill: #59656d; font-family: "Noto Sans CJK TC", sans-serif; }
.axes { position: absolute; right: 0; bottom: 17px; width: 34px; height: 35px; }
.axes text { fill: #080808; font-family: "Liberation Sans", sans-serif; font-weight: bold; }
.doc-tabs { display: flex; align-items: flex-start; height: 33px; }
.doc-tab { display: flex; align-items: center; height: 29px; padding: 0 8px 0 6px; border: solid #1f1f1f; border-width: 0 1px 1px 0; border-radius: 0 0 3px 3px; background: #262626; color: #a5a5a5; }
.doc-tab button { display: flex; align-items: center; gap: 10px; }
.doc-tab button svg { width: 11px; height: 15px; }
.doc-tab.start button svg { width: 14px; height: 17px; }
.doc-tab .x { margin: 3px 0 0 12px; }
.doc-tab .x svg, .doc-tab.start .x svg { width: 14px; height: 14px; }
.doc-tab.active { height: 32px; background: #3b3b3b; color: #fff; }

.statusbar { display: flex; flex: none; align-items: center; gap: 6px; height: 32px; padding: 0 1px 1px 2px; background: #333; }
.statusbar p { flex: 1; }
.status-btn { display: flex; align-items: center; width: 90px; height: 26px; padding: 0 2px 0 1px; border: 1px solid #050505; border-radius: 3px; background: linear-gradient(#292929, #3d3d3d); }
.status-btn svg { height: 14px; }
.status-btn .caret { margin: 5px 0 0 auto; border-width: 4px 4px 0; border-top-color: #c0c0c0; }
.notes svg { width: 14px; margin-right: 5px; }
.mouse { padding-left: 22px; }
.mouse svg { width: 10px; margin-right: 5px; }
.status-btn.size { width: 142px; height: 22px; padding-left: 3px; }
.size .caret { margin-top: 0; }
.resize { align-self: flex-end; width: 10px; height: 10px; }
```
